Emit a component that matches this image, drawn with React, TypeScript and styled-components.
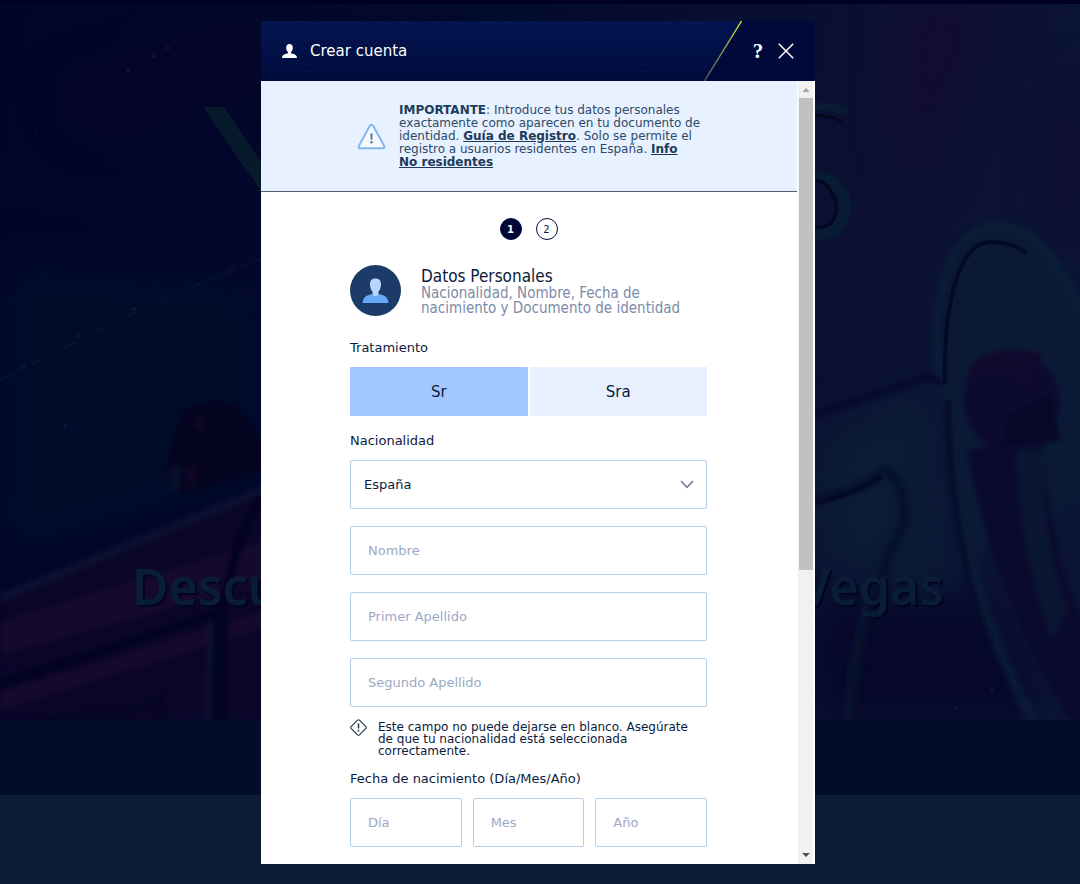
import React, { useState } from "react";
import styled, { createGlobalStyle } from "styled-components";

const GlobalStyle = createGlobalStyle`
  *, *::before, *::after { box-sizing: border-box; }
  body {
    margin: 0;
    background: #0b1b35;
    color: #0b1b40;
    font-family: "DejaVu Sans", Verdana, sans-serif;
  }
`;

/* ---------- page behind the dialog ---------- */

const Page = styled.main`
  min-height: 100vh;
  border-top: 4px solid #000022;
  overflow: hidden;
`;

const Hero = styled.section`
  position: relative;
  height: 716px;
  display: flex;
  align-items: flex-end;
  background: linear-gradient(100deg, #02052a 0%, #020a2b 40%, #0c1133 75%, #0b1538 100%);
`;

const HeroArt = styled.svg`
  position: absolute;
  inset: 0;
  width: 100%;
  height: 100%;
`;

const HeroTitle = styled.h1`
  position: relative;
  width: 100%;
  margin: 0;
  padding: 0 136px 98px 132px;
  display: flex;
  justify-content: space-between;
  font: 600 50px/72px "Noto Sans", sans-serif;
  color: #0a1d38;
  text-shadow: 2px 2px 1px #02051f;
`;

const Strip = styled.div`
  height: 75px;
  background: #000e2c;
`;

/* ---------- dialog ---------- */

const Overlay = styled.div`
  position: fixed;
  inset: 0;
  padding: 21px 22px 20px 18px;
  display: flex;
  justify-content: center;
`;

const Dialog = styled.section`
  width: 100%;
  max-width: 554px;
  display: flex;
  flex-direction: column;
  background: #fff;
`;

const DialogHeader = styled.header`
  flex: none;
  height: 60px;
  display: flex;
  background:
    repeating-linear-gradient(60deg, rgba(30, 90, 170, 0.12) 0 1px, transparent 1px 3px),
    linear-gradient(#02124c, #000d42 55%, #000838);
  color: #fff;
`;

const DialogTitle = styled.h2`
  flex: 1;
  margin: 0;
  padding-left: 21px;
  display: flex;
  align-items: center;
  gap: 13px;
  font-size: 15px;
  line-height: 20px;
  font-weight: 400;
`;

const Slash = styled.svg`
  flex: none;
  display: block;
`;

const HeaderActions = styled.div`
  width: 73px;
  padding-left: 5px;
  display: flex;
  align-items: center;
  gap: 6px;
  background: #00093a;
`;

const IconButton = styled.button`
  width: 22px;
  height: 28px;
  padding: 0;
  border: 0;
  display: flex;
  align-items: center;
  justify-content: center;
  background: none;
  color: #fff;
  font: 700 21px/28px "Liberation Serif", serif;
  cursor: pointer;
`;

const DialogBody = styled.div`
  flex: 1;
  min-height: 0;
  display: flex;
`;

const Content = styled.div`
  flex: 1;
  overflow-y: auto;
  scrollbar-width: none;
`;

const Notice = styled.div`
  min-height: 111px;
  padding: 0 89px 0 96px;
  display: flex;
  align-items: center;
  gap: 13px;
  background: #e8f1ff;
  border-bottom: 1px solid #4d5d75;
  color: #2d4a68;

  svg { flex: none; }
`;

const NoticeText = styled.p`
  margin: 0;
  font-size: 12px;
  line-height: 13px;

  strong { color: #1f3d5c; }
`;

const NoticeLink = styled.a`
  color: #1b3a5b;
  font-weight: 700;
  text-decoration: underline;
`;

const Form = styled.form`
  padding: 26px 90px 17px 89px;
`;

const Steps = styled.ol`
  margin: 0 0 25px;
  padding: 0;
  display: flex;
  justify-content: center;
  gap: 14px;
  list-style: none;
`;

const Step = styled.li<{ $active?: boolean }>`
  width: 22px;
  height: 22px;
  border: 1px solid #000a3a;
  border-radius: 50%;
  display: flex;
  align-items: center;
  justify-content: center;
  font-size: 10px;
  font-weight: ${(p) => (p.$active ? 700 : 400)};
  background: ${(p) => (p.$active ? "#000638" : "#fff")};
  color: ${(p) => (p.$active ? "#fff" : "#0b1b40")};
`;

const SectionHead = styled.div`
  margin-bottom: 22px;
  display: flex;
  align-items: center;
  gap: 20px;
  font-family: "DejaVu Sans Condensed", "DejaVu Sans", sans-serif;
`;

const SectionTitle = styled.h3`
  margin: 0;
  font-size: 17px;
  line-height: 20px;
  font-weight: 400;
`;

const SectionText = styled.p`
  margin: 0;
  font-size: 15px;
  line-height: 15px;
  color: #7b8ba8;
`;

const Group = styled.fieldset`
  min-width: 0;
  margin: 0;
  padding: 0;
  border: 0;
`;

const labelText = `
  display: block;
  padding: 0;
  margin: 0 0 9px;
  font-size: 13px;
  line-height: 20px;
`;

const Legend = styled.legend`${labelText}`;
const Label = styled.label`${labelText}`;

const Segments = styled.div`
  margin-bottom: 15px;
  display: grid;
  grid-template-columns: 1fr 1fr;
  gap: 2px;
`;

const Segment = styled.label<{ $selected: boolean }>`
  height: 49px;
  position: relative;
  display: flex;
  align-items: center;
  justify-content: center;
  border-radius: 1px;
  font-size: 15px;
  background: ${(p) => (p.$selected ? "#a2c8ff" : "#e8f0ff")};
  cursor: pointer;

  input {
    position: absolute;
    inset: 0;
    width: 100%;
    height: 100%;
    margin: 0;
    opacity: 0;
  }
`;

const Fields = styled.div`
  display: flex;
  flex-direction: column;
  gap: 17px;
`;

const control = `
  width: 100%;
  height: 49px;
  border: 1px solid #b4cfec;
  border-radius: 2px;
  background: #fff;
  color: #0b1b40;
  font: 400 13px/20px "DejaVu Sans", Verdana, sans-serif;
`;

const SelectBox = styled.div`
  position: relative;

  select {
    ${control}
    display: block;
    padding: 0 40px 0 13px;
    appearance: none;
  }

  svg {
    position: absolute;
    right: 13px;
    top: 20px;
    pointer-events: none;
  }
`;

const TextInput = styled.input`
  ${control}
  min-width: 0;
  padding: 0 17px;

  &::placeholder { color: #9ba9c4; opacity: 1; }
`;

const FieldError = styled.p`
  margin: 12px 0;
  display: flex;
  align-items: flex-start;
  gap: 11px;
  font-size: 12px;
  line-height: 12px;

  svg { flex: none; }
  span { padding-top: 2px; }
`;

const DateFields = styled.div`
  display: grid;
  grid-template-columns: repeat(3, 1fr);
  gap: 11px;
`;

/* ---------- scrollbar ---------- */

const ScrollRail = styled.div`
  width: 18px;
  flex: none;
  padding: 0 2px;
  display: flex;
  flex-direction: column;
  background: linear-gradient(#f1f1f0, #f1f1f0) 1px 0 / 15px 100% no-repeat;
`;

const ScrollArrow = styled.svg`
  flex: none;
  display: block;
`;

const ScrollTrack = styled.div`
  flex: 1;
`;

const ScrollThumb = styled.div`
  height: 63%;
  background: #c1c1c1;
`;

const sparkles = [
  [20, 100, 1], [36, 96, 1], [16, 108, 1], [36, 131, 1], [62, 85, 1], [106, 106, 1], [125, 43, 1],
  [154, 56, 2], [128, 70, 2], [168, 48, 2], [181, 83, 1], [208, 33, 1], [224, 62, 1], [201, 14, 1],
  [134, 146, 1], [163, 161, 1], [93, 180, 1], [100, 195, 1], [147, 206, 1], [133, 220, 1],
  [212, 173, 1], [205, 193, 1], [231, 214, 1], [210, 237, 1], [187, 251, 1], [153, 247, 1],
  [114, 284, 1], [46, 268, 1], [10, 244, 1], [65, 426, 2], [134, 309, 2], [78, 336, 2], [24, 367, 2],
  [992, 690, 2], [956, 708, 2], [1054, 654, 1], [1072, 636, 1],
];

function Backdrop() {
  return (
    <HeroArt viewBox="0 4 1080 716" preserveAspectRatio="none" aria-hidden="true">
      <defs>
        <filter id="soft" colorInterpolationFilters="sRGB"><feGaussianBlur stdDeviation="2.500" /></filter>
        <filter id="haze" colorInterpolationFilters="sRGB" x="-20%" y="-20%" width="140%" height="140%"><feGaussianBlur stdDeviation="22" /></filter>
      </defs>
      <g filter="url(#haze)">
        <path d="M60 90 L260 20 L260 90 L90 130Z" fill="#08042a" />
        <path d="M0 260 L260 290 L260 470 L0 560Z" fill="#010c2a" />
        <path d="M900 0 L1000 0 L920 190 L900 150Z" fill="#120c31" />
        <path d="M1060 80 L1080 80 L1080 250 L1050 200Z" fill="#130a32" />
        <path d="M815 440 L930 380 L950 600 L815 560Z" fill="#0a1c36" />
        <path d="M815 600 L990 600 L1040 720 L815 720Z" fill="#06072b" />
      </g>
      <g filter="url(#soft)">
        <path d="M0 594 L270 483 L270 720 L0 720Z" fill="#0b0629" />
        <path d="M0 594 L270 483 L270 491 L0 602Z" fill="#0d1232" />
        <path d="M0 622 L270 540 L270 580 L0 655Z" fill="#160a2c" />
        <path d="M0 692 L270 610 L270 626 L0 710Z" fill="#160a2c" />
        <path d="M262 496 C240 530 230 570 222 612 L0 684" fill="none" stroke="#02021f" strokeWidth="9" />
        <path d="M220 610 V720" stroke="#02041f" strokeWidth="16" />
        <path d="M211 620 L208 720" stroke="#0b1737" strokeWidth="4" />
        <path d="M50 718 C90 708 120 724 162 696 V720" fill="none" stroke="#02041f" strokeWidth="4" />
        <path d="M180 415 Q210 390 238 408 L262 440 V470 L180 495 L165 470Z" fill="#040420" />
        <path d="M196 412 l12 8 l-6 12 l-10 -8Z M186 470 l10 -6 v20 l-10 6Z" fill="#0f0524" />
        <path d="M170 468 l10 -4 v24 l-10 4Z" fill="#0a102e" />
      </g>
      <path d="M0 380 C90 336 130 310 262 258" fill="none" stroke="#0a1030" strokeWidth="2" strokeDasharray="16 6 4 9" />
      <g fill="#0e1536">
        {sparkles.map(([x, y, r]) => (
          <circle key={`${x}-${y}`} cx={x} cy={y} r={r} />
        ))}
      </g>
      <path d="M224 107 L262 163 L262 194 L252 180Z" fill="#020318" />
      <path d="M203 107 H224 L262 163 V193Z" fill="#071a2b" />
      <path d="M780 190 C800 165 846 176 845 206 C844 228 835 236 800 235" fill="none" stroke="#071c32" strokeWidth="12" />
      <path d="M815 180 C832 182 840 206 834 218 C830 226 824 228 812 228" fill="none" stroke="#03071f" strokeWidth="3" />
      <path d="M812 107 C826 106 838 107 848 112" fill="none" stroke="#071c32" strokeWidth="8" />
      <path d="M812 115 C822 115 832 117 842 121" fill="none" stroke="#04081f" strokeWidth="3" />
      <g filter="url(#soft)">
        <path d="M944 400 C938 300 960 226 1000 228 C1040 232 1060 270 1084 310 V500 L960 560Z" fill="#0a1a36" />
        <path d="M939 390 C930 300 950 228 995 226 C1040 226 1060 270 1084 312" fill="none" stroke="#0a1d37" strokeWidth="9" />
        <ellipse cx="1012" cy="402" rx="48" ry="50" fill="#0c0a30" />
        <path d="M966 382 C970 350 1010 345 1042 354 L1030 392 L1000 372Z" fill="#12092f" />
        <path d="M1010 415 L1050 395 L1060 440 L1000 455Z" fill="#070728" />
        <path d="M1042 440 C1050 520 1060 580 1084 620 V720 H1070 C1010 620 985 540 966 450Z" fill="#0a0a2e" />
        <path d="M1020 450 H1044 C1044 530 1056 580 1068 610 L1052 640 C1028 570 1018 520 1016 452Z" fill="#0a1632" />
        <path d="M815 415 L930 376 L942 384" fill="none" stroke="#06082c" strokeWidth="7" />
        <path d="M815 500 Q860 492 886 470 Q904 480 905 520 C880 575 858 620 852 720" fill="none" stroke="#061029" strokeWidth="9" />
        <path d="M886 470 Q895 510 884 552 C864 600 850 650 846 720" fill="none" stroke="#0a1a36" strokeWidth="3" />
        <path d="M954 440 C960 540 985 630 1034 722" fill="none" stroke="#0a1a36" strokeWidth="10" />
        <path d="M948 400 C948 520 975 620 1016 720" fill="none" stroke="#040a28" strokeWidth="5" />
      </g>
      <path d="M945 384 C943 290 964 240 992 242 C1010 243 1016 246 1026 253" fill="none" stroke="#030a28" strokeWidth="4" />
      <path d="M815 503 Q856 494 882 476" fill="none" stroke="#04092a" strokeWidth="4" />
    </HeroArt>
  );
}

export default function App() {
  const [title, setTitle] = useState("Sr");

  return (
    <>
      <GlobalStyle />
      <Page>
        <Hero>
          <Backdrop />
          <HeroTitle>
            <span>Descu</span>
            <span>Vegas</span>
          </HeroTitle>
        </Hero>
        <Strip />
      </Page>

      <Overlay>
        <Dialog role="dialog" aria-modal="true" aria-labelledby="dialog-title">
          <DialogHeader>
            <DialogTitle id="dialog-title">
              <svg width="15" height="15" viewBox="0 0 15 15" fill="#fff" aria-hidden="true">
                <path d="M7.500 0c2.100 0 3.300 1.500 3.300 3.800 0 2-.8 3.500-1.800 4.300v1.200c2 .6 6 1.200 6 4.700H0c0-3.500 4-4.100 6-4.700V8.100C5 7.300 4.200 5.800 4.200 3.800 4.200 1.500 5.400 0 7.500 0z" />
              </svg>
              Crear cuenta
            </DialogTitle>
            <Slash width="38" height="60" viewBox="0 0 38 60" aria-hidden="true">
              <defs>
                <linearGradient id="slash" x1="0" y1="1" x2="0" y2="0">
                  <stop offset="0" stopColor="#4d5f50" />
                  <stop offset="0.5" stopColor="#8b9a48" />
                  <stop offset="1" stopColor="#e0e62c" />
                </linearGradient>
              </defs>
              <path d="M38 0 L0 60 H38Z" fill="#00093a" />
              <path d="M37.500 0 L0.500 60" stroke="url(#slash)" strokeWidth="1.300" />
            </Slash>
            <HeaderActions>
              <IconButton type="button" aria-label="Ayuda">?</IconButton>
              <IconButton type="button" aria-label="Cerrar">
                <svg width="16" height="16" viewBox="0 0 16 16" stroke="#fff" strokeWidth="1.500" aria-hidden="true">
                  <path d="M0.800 0.800 L15.200 15.200 M15.200 0.800 L0.800 15.200" />
                </svg>
              </IconButton>
            </HeaderActions>
          </DialogHeader>

          <DialogBody>
            <Content>
              <Notice>
                <svg width="29" height="27" viewBox="0 0 29 27" fill="none" aria-hidden="true">
                  <path d="M14.500 1.700c.7 0 1.200.3 1.500.9l11.200 20.500c.6 1.100-.1 2.200-1.300 2.200H3.100c-1.200 0-1.900-1.100-1.300-2.200L13 2.600c.3-.6.8-.9 1.500-.9z" fill="#f6faff" stroke="#82b8f2" strokeWidth="2" strokeLinejoin="round" />
                  <path d="M13.300 10.500h2.400l-.5 6.500h-1.400z" fill="#53779f" />
                  <circle cx="14.500" cy="19.300" r="1.200" fill="#53779f" />
                </svg>
                <NoticeText>
                  <strong>IMPORTANTE</strong>: Introduce tus datos personales exactamente como aparecen en tu
                  documento de identidad. <NoticeLink href="#guia">Guía de Registro</NoticeLink>. Solo se permite el
                  registro a usuarios residentes en España.{" "}
                  <NoticeLink href="#info">
                    Info
                    <br />
                    No residentes
                  </NoticeLink>
                </NoticeText>
              </Notice>

              <Form onSubmit={(e) => e.preventDefault()}>
                <Steps>
                  <Step $active aria-current="step">1</Step>
                  <Step>2</Step>
                </Steps>

                <SectionHead>
                  <svg width="51" height="51" viewBox="0 0 51 51" aria-hidden="true">
                    <circle cx="25.500" cy="25.500" r="25.500" fill="#1d3b68" />
                    <path d="M12.500 38c.8-5.500 2.500-7.200 9-8.800h8c6.500 1.600 8.200 3.300 9 8.800z" fill="#66a9f5" />
                    <path d="M25.500 13.500c4 0 5.800 2.500 5.500 6.500-.2 3-1.300 5.300-2.500 6.500v3c-1 2-5 2-6 0v-3c-1.200-1.200-2.300-3.500-2.500-6.500-.3-4 1.500-6.500 5.500-6.500z" fill="#b5d6ff" />
                  </svg>
                  <div>
                    <SectionTitle>Datos Personales</SectionTitle>
                    <SectionText>
                      Nacionalidad, Nombre, Fecha de
                      <br />
                      nacimiento y Documento de identidad
                    </SectionText>
                  </div>
                </SectionHead>

                <Group>
                  <Legend>Tratamiento</Legend>
                  <Segments>
                    {["Sr", "Sra"].map((option) => (
                      <Segment key={option} $selected={title === option}>
                        <input
                          type="radio"
                          name="tratamiento"
                          value={option}
                          checked={title === option}
                          onChange={() => setTitle(option)}
                        />
                        {option}
                      </Segment>
                    ))}
                  </Segments>
                </Group>

                <Label htmlFor="nacionalidad">Nacionalidad</Label>
                <Fields>
                  <SelectBox>
                    <select id="nacionalidad" defaultValue="España">
                      <option>España</option>
                    </select>
                    <svg width="14" height="9" viewBox="0 0 14 9" fill="none" stroke="#747f94" strokeWidth="1.700" aria-hidden="true">
                      <path d="M1 1 L7 7.300 L13 1" />
                    </svg>
                  </SelectBox>
                  <TextInput aria-label="Nombre" placeholder="Nombre" />
                  <TextInput aria-label="Primer Apellido" placeholder="Primer Apellido" />
                  <TextInput aria-label="Segundo Apellido" placeholder="Segundo Apellido" aria-describedby="apellido-error" />
                </Fields>

                <FieldError id="apellido-error">
                  <svg width="17" height="17" viewBox="0 0 17 17" fill="none" aria-hidden="true">
                    <path d="M7.600 1.100Q8.500.3 9.400 1.100L15.900 7.600Q16.700 8.500 15.900 9.400L9.400 15.900Q8.500 16.700 7.600 15.900L1.100 9.400Q.3 8.500 1.100 7.600Z" stroke="#24304a" strokeWidth="1.100" />
                    <path d="M8.500 4.500v5" stroke="#24304a" strokeWidth="1.500" />
                    <circle cx="8.500" cy="11.700" r="0.900" fill="#24304a" />
                  </svg>
                  <span>
                    Este campo no puede dejarse en blanco. Asegúrate
                    <br />
                    de que tu nacionalidad está seleccionada
                    <br />
                    correctamente.
                  </span>
                </FieldError>

                <Group>
                  <Legend>Fecha de nacimiento (Día/Mes/Año)</Legend>
                  <DateFields>
                    <TextInput aria-label="Día" placeholder="Día" />
                    <TextInput aria-label="Mes" placeholder="Mes" />
                    <TextInput aria-label="Año" placeholder="Año" />
                  </DateFields>
                </Group>
              </Form>
            </Content>

            <ScrollRail aria-hidden="true">
              <ScrollArrow width="14" height="17" viewBox="0 0 14 17">
                <path d="M3.500 11 L7 7 L10.500 11Z" fill="#a3a3a3" />
              </ScrollArrow>
              <ScrollTrack>
                <ScrollThumb />
              </ScrollTrack>
              <ScrollArrow width="14" height="17" viewBox="0 0 14 17">
                <path d="M3 6 L7 10 L11 6Z" fill="#505050" />
              </ScrollArrow>
            </ScrollRail>
          </DialogBody>
        </Dialog>
      </Overlay>
    </>
  );
}
